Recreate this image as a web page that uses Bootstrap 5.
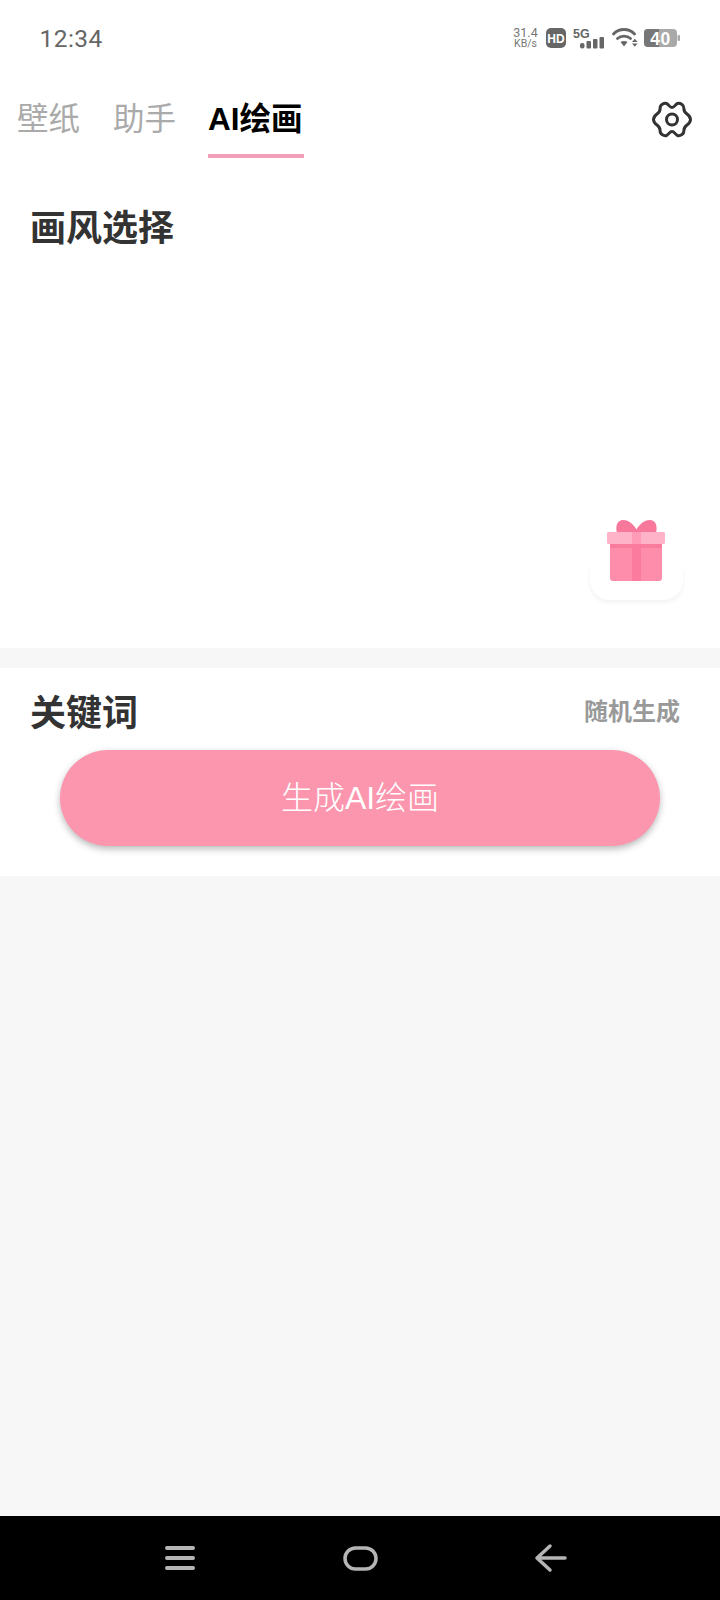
<!DOCTYPE html>
<html lang="zh"><head><meta charset="utf-8">
<link href="https://cdn.jsdelivr.net/npm/bootstrap@5.3.0/dist/css/bootstrap.min.css" rel="stylesheet">
<style>
html,body{margin:0;background:#f7f7f7}
body{font-family:"Liberation Sans","Noto Sans CJK SC",sans-serif}
.phone{width:720px;height:1600px}
.stat{height:76px;padding:0 40px 0 39.500px;color:#666}
.clock{font-family:Roboto,sans-serif;font-size:24.500px;letter-spacing:.45px;padding-top:3px}
.speed{font-family:Roboto,sans-serif;font-size:12.500px;line-height:11.500px;text-align:center;color:#777;width:25px;margin-right:8px}
.speed-unit{font-size:10.500px}
.hd-ic{margin-right:7px}
.fiveg-ic{margin-right:8px}
.wifi-ic{margin-right:6px}
.tabbar{height:86px;padding-left:17px;padding-right:27px}
.tabitem{font-size:31.500px;line-height:40px;color:#aaa;margin-right:33px;height:82px;padding-top:23px}
.tabitem.on{color:#000;font-weight:700;width:96px;margin:0 0 0 -1px;border-bottom:4px solid #f19fb8;white-space:nowrap}
.gear-ic{margin-top:25px}
.stylebox{height:486px;padding:43px 30px 0}
.sect{font-size:36px;line-height:48px;font-weight:700;color:#333;margin:0}
.gap{height:20px}
.kwbox{height:208px;padding:22px 40px 0 30px}
.rand{font-size:24px;font-weight:700;color:#999;line-height:44px}
.gobtn{width:600px;height:96px;margin:12px 0 0 30px;border-radius:48px;border:0;background:#fb96ae;color:#fff;font-size:32px;font-weight:300;box-shadow:0 3px 7px rgba(0,0,0,.28);padding:0}
.gobtn:hover,.gobtn:active{background:#fb96ae!important;color:#fff!important}
.navb{height:84px;background:#000}
.giftcard{position:absolute;left:590px;top:504px;width:93px;height:96px;border-radius:0 0 20px 20px;background:#fff;box-shadow:0 3px 4px rgba(0,0,0,.05);clip-path:inset(66px -10px -10px -10px)}
.gift-ic{position:absolute;left:606px;top:519px}
</style></head>
<body>
<div class="phone d-flex flex-column position-relative">
  <div class="stat bg-white d-flex align-items-center justify-content-between">
    <span class="clock">12:34</span>
    <div class="d-flex align-items-center">
      <div class="speed"><div>31.4</div><div class="speed-unit">KB/s</div></div>
      <svg class="hd-ic" width="20" height="20" viewBox="0 0 20 20"><rect width="20" height="20" rx="5" fill="#666"/><text x="10" y="14.500" text-anchor="middle" font-family="Liberation Sans" font-weight="700" font-size="12" fill="#fff">HD</text></svg>
      <svg class="fiveg-ic" width="31" height="22" viewBox="0 0 31 22"><text x="0" y="11" font-family="Liberation Sans" font-weight="700" font-size="12.500" fill="#666">5G</text><g fill="#666"><rect x="7" y="16" width="4.500" height="5.500" rx="2"/><rect x="13.500" y="14" width="4.500" height="7.500" rx="1"/><rect x="20" y="12" width="4.500" height="9.500" rx="1"/><rect x="26.500" y="10" width="4.500" height="11.500" rx="1"/></g></svg>
      <svg class="wifi-ic" width="26" height="22" viewBox="0 0 26 22"><g fill="none" stroke="#666" stroke-width="2.800" stroke-linecap="round"><path d="M1.500 7C7 1 17 1 22.500 7"/><path d="M5.500 11.500c3.500-3.300 9.500-3.300 13 0"/></g><path d="M8.500 15c2-1.500 5-1.500 7 0L12 19.500z" fill="#666"/><path d="M20 15l2.800-3.200L25.600 15zM20 16.500l2.800 3.200 2.800-3.200z" fill="#666"/></svg>
      <svg width="36" height="18" viewBox="0 0 36 18"><rect width="33" height="18" rx="4" fill="#a9a9a9"/><path d="M4 0H15V18H4a4 4 0 0 1-4-4V4a4 4 0 0 1 4-4z" fill="#777"/><rect x="33.500" y="6" width="2.500" height="6" rx="1" fill="#aaa"/><text x="16.500" y="15.500" text-anchor="middle" font-family="Liberation Sans" font-weight="700" font-size="17.500" letter-spacing=".5" fill="#fff">40</text></svg>
    </div>
  </div>
  <div class="tabbar bg-white d-flex align-items-start">
    <div class="tabitem">壁纸</div>
    <div class="tabitem">助手</div>
    <div class="tabitem on">AI绘画</div>
    <svg class="gear-ic ms-auto" width="42" height="37" viewBox="0 0 42 37" fill="none" stroke="#333" stroke-width="3" stroke-linejoin="round"><path d="M21 6.500C23.500 6.500 24 3.500 26.500 2.500C28 2 29.500 2.500 31 3.500C32.500 4.500 33 5.500 32.900 7.500C32.800 10 34 11.500 36 13C38 14.500 39.500 16.500 39.500 18.500C39.500 20.500 38 22.500 36 24C34 25.500 32.800 27 32.900 29.500C33 31.500 32.500 32.500 31 33.500C29.500 34.500 28 35 26.500 34.500C24 33.500 23.500 30.500 21 30.500C18.500 30.500 18 33.500 15.500 34.500C14 35 12.500 34.500 11 33.500C9.500 32.500 9 31.500 9.100 29.500C9.200 27 8 25.500 6 24C4 22.500 2.500 20.500 2.500 18.500C2.500 16.500 4 14.500 6 13C8 11.500 9.200 10 9.100 7.500C9 5.500 9.500 4.500 11 3.500C12.500 2.500 14 2 15.500 2.500C18 3.500 18.500 6.500 21 6.500Z"/><circle cx="21" cy="18.500" r="5.500"/></svg>
  </div>
  <div class="stylebox bg-white"><h2 class="sect">画风选择</h2></div>
  <div class="gap"></div>
  <div class="kwbox bg-white">
    <div class="d-flex justify-content-between align-items-start"><h2 class="sect">关键词</h2><span class="rand">随机生成</span></div>
    <button class="btn gobtn d-block" type="button">生成AI绘画</button>
  </div>
  <div class="flex-grow-1"></div>
  <div class="navb d-flex align-items-center">
    <svg width="720" height="84" viewBox="0 0 720 84" fill="none" stroke="#b5b5b5" stroke-linecap="round"><path d="M167 32h26M167 42h26M167 52h26" stroke-width="4"/><rect x="345" y="32" width="31" height="21" rx="10.500" stroke-width="3.500"/><path d="M565 42h-28M550 30l-13 12 13 12" stroke-width="3.500" stroke-linejoin="round"/></svg>
  </div>
  <div class="giftcard"></div>
  <svg class="gift-ic" width="60" height="64" viewBox="0 0 60 64">
    <path d="M11 14C9 6 12 1 17 1C23 1 28 6 30.500 10.500C33 6 38 1 44 1C49 1 52 6 50 14z" fill="#f8789c"/>
    <rect x="4" y="24" width="52" height="38" rx="3" fill="#fd8dab"/>
    <rect x="4" y="25" width="52" height="4" fill="#f97c9d"/>
    <rect x="1" y="13" width="58" height="12" rx="1.500" fill="#ffb3c8"/>
    <rect x="26" y="13" width="9" height="12" fill="#ff9bb6"/>
    <rect x="26" y="25" width="9" height="37" fill="#fb7b9e"/>
  </svg>
</div>
<script src="https://cdn.jsdelivr.net/npm/bootstrap@5.3.0/dist/js/bootstrap.bundle.min.js"></script>
</body></html>
